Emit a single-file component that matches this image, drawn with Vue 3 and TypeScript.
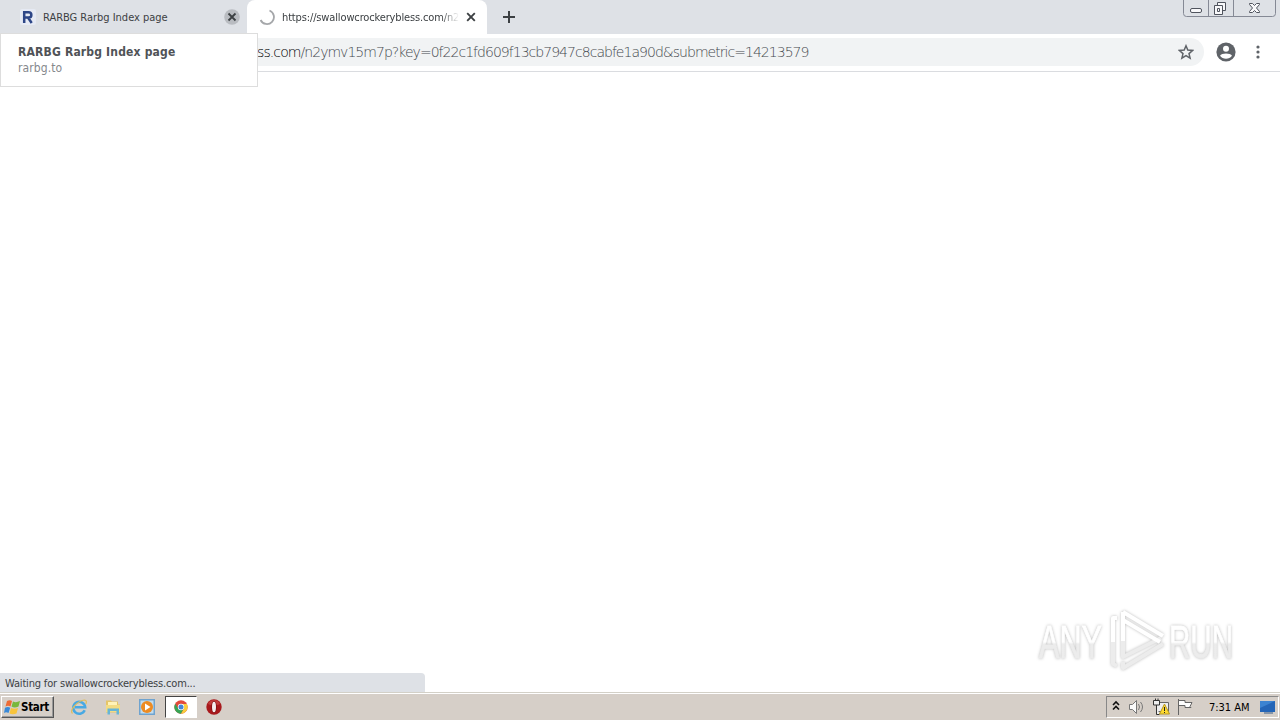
<script setup lang="ts">
const tabs = { first: 'RARBG Rarbg Index page', second: 'https://swallowcrockerybless.com/n2' }
</script>

<template>
  <div class="screen">
    <header class="strip">
      <div class="tab idle">
        <svg class="fav" width="16" height="16" viewBox="0 0 16 16"><rect width="16" height="16" rx="2" fill="#e6eaf4" /><path d="M4.200 14V3.300h4.300c3.800 0 3.800 5.200 0 5.200H4.200M8 8.500 11.700 14" fill="none" stroke="#2d4687" stroke-width="2.500" /></svg>
        <span class="title t1">{{ tabs.first }}</span>
        <svg class="close" width="16" height="16" viewBox="0 0 16 16"><circle cx="8" cy="8" r="7.800" fill="#b9bcc1" /><path d="m4.500 4.500 7 7m0-7-7 7" stroke="#3c4043" stroke-width="1.800" /></svg>
      </div>
      <div class="tab active">
        <svg class="fav" width="16" height="16" viewBox="0 0 16 16"><path d="M10.500 1.500A7 7 0 1 1 1.600 11" fill="none" stroke="#a5a7aa" stroke-width="1.800" /></svg>
        <span class="title t2">{{ tabs.second }}</span>
        <svg class="close" width="16" height="16" viewBox="0 0 16 16"><path d="m4.200 4.200 7.600 7.600m0-7.600-7.600 7.600" stroke="#3c4043" stroke-width="1.900" /></svg>
      </div>
      <svg class="plus" width="14" height="14" viewBox="0 0 14 14"><path d="M7 1v12M1 7h12" stroke="#3c4043" stroke-width="2" /></svg>
      <svg class="winbtns" width="96" height="18" viewBox="0 0 96 18" fill="none" stroke="#858995">
        <path d="M.5 0v13.500q0 3 3 3h86q3 0 3-3V0M25.500 0v16M50.500 0v16" />
        <g stroke="#50545e"><rect x="7.500" y="8.500" width="11" height="4" rx="1.500" fill="#f8f8fa" /><path d="M34.500 5.500v-3h8v8h-3M31.500 5.500h8v9h-8zM34.500 8.500h2v3h-2z" fill="#f8f8fa" /><path d="M66.500 3.500h3l2 2 2-2h3v1l-3 3.500 3 3.500v1h-3l-2-2-2 2h-3v-1l3-3.500-3-3.500z" fill="#f8f8fa" /></g>
      </svg>
    </header>

    <div class="toolbar">
      <div class="omnibox">
        <span class="url"><b>ss.com</b>/n2ymv15m7p?key=0f22c1fd609f13cb7947c8cabfe1a90d&amp;submetric=14213579</span>
        <svg class="star" width="16" height="16" viewBox="0 0 16 16"><path d="m8 1.800 1.800 4.300 4.700.4L11 9.600l1.100 4.600L8 11.700l-4.100 2.500L5 9.600 1.500 6.500l4.700-.4z" fill="none" stroke="#5f6368" stroke-width="1.500" /></svg>
      </div>
      <svg class="person" width="20" height="20" viewBox="0 0 20 20"><circle cx="10" cy="10" r="9.600" fill="#5f6368" /><circle cx="10" cy="6.700" r="3" fill="#fff" /><path d="M4 13.800c1.500-3 10.500-3 12 0-2.600 4-9.400 4-12 0z" fill="#fff" /></svg>
      <svg class="dots" width="4" height="16" viewBox="0 0 4 16" fill="#5f6368"><circle cx="2" cy="3" r="1.600" /><circle cx="2" cy="8" r="1.600" /><circle cx="2" cy="13" r="1.600" /></svg>
    </div>

    <main class="page">
      <div class="status"><span>Waiting for swallowcrockerybless.com...</span></div>
      <svg class="mark" width="215" height="80" viewBox="0 0 215 80">
        <defs><linearGradient id="fade" x1="0" y1="0" x2="0" y2="1"><stop offset=".5" stop-color="#fff" /><stop offset=".54" stop-color="#ececec" /></linearGradient></defs>
        <g class="word" fill="url(#fade)" stroke="url(#fade)" stroke-width=".8"><text x="9" y="58" textLength="63" lengthAdjust="spacingAndGlyphs">ANY</text><text x="139" y="58" textLength="64" lengthAdjust="spacingAndGlyphs">RUN</text></g>
        <g class="play" fill="none" stroke-linejoin="round"><path d="M83 41v23l4 2M93 40v17l38-19M93 62v6l40-24" stroke="#ececec" stroke-width="4" /><path d="M87 18h-4v24M93 12v29M93 12l40 24M93 20l37 22" stroke="#fff" stroke-width="4" /></g>
      </svg>
    </main>

    <footer class="taskbar">
      <div class="start">
        <svg width="17" height="16" viewBox="0 0 17 16"><path d="M3 2q3-1.500 5 0L6.500 7.500Q4 6 1.500 7.500z" fill="#ed6b35" /><path d="M9 2.500q3 1.500 7-.5l-1.500 5.500q-4 1.800-7 0z" fill="#79b83c" /><path d="M1 8.700q3-1.500 5.200 0L4.500 14Q2 12.500 0 14z" fill="#3889d8" /><path d="M7 9q3.500 1.500 7 0l-1.500 5.500q-4 1.500-7 0z" fill="#f8c43b" /></svg>
        <span>Start</span>
      </div>
      <svg class="app ie" width="18" height="18" viewBox="0 0 18 18" fill="none"><path d="M14.700 12.300A6 6 0 1 1 15.200 9.200H5" stroke="#48a9e3" stroke-width="2.500" /><path d="M2.500 15.500C-1 12 8 2.500 14.500 2c2 0 2.300 2 1.300 4" stroke="#dfbd5c" stroke-width="1.200" /></svg>
      <svg class="app folder" width="18" height="18" viewBox="0 0 18 18"><path d="M2 2.500h5l1 1h6v3h2v8H2z" fill="#e5c568" /><path d="M4 4h9v5H4z" fill="#fff3b8" /><path d="M2 7h14v7H2z" fill="#f3dc83" /><path d="M3.500 16.500v-6h11.500v6h-2.500v-3.500H6v3.500z" fill="#67b5d6" /></svg>
      <svg class="app media" width="18" height="18" viewBox="0 0 18 18"><path d="M1 1h16v16H1z" fill="#6fa3cf" /><path d="M2.500 2.500h13v13h-13z" fill="#c3dced" /><circle cx="9" cy="9" r="6" fill="#ed8b22" /><path d="m7 5.500 5.500 3.500L7 12.500z" fill="#fff" /></svg>
      <div class="pressed">
        <svg width="14" height="14" viewBox="0 0 14 14"><circle cx="7" cy="7" r="6.700" fill="#e24a3b" /><path d="M1.200 3.700A6.700 6.700 0 0 0 7 13.700L9.800 8.600 4.200 8.600z" fill="#35a555" /><path d="M7 13.700a6.700 6.700 0 0 0 5.900-9.700H7l3 4.500z" fill="#f8ce3c" /><circle cx="7" cy="7" r="3.200" fill="#fff" /><circle cx="7" cy="7" r="2.500" fill="#4285d8" /></svg>
      </div>
      <svg class="app opera" width="16" height="16" viewBox="0 0 16 16"><circle cx="8" cy="8" r="7.700" fill="#a8191c" /><path d="M2 5a6.500 6.500 0 0 1 12 0q-6 3-12 0" fill="#c23c3b" /><ellipse cx="8" cy="8" rx="2.800" ry="6" fill="#7c1012" /><ellipse cx="8" cy="8" rx="2" ry="5.300" fill="#f5eeee" /></svg>
      <div class="tray">
        <svg class="trayicons" width="90" height="20" viewBox="0 0 90 20" fill="none">
          <path d="m6 8 3-3 3 3m-6 4.500 3-3 3 3" stroke="#111" stroke-width="1.600" />
          <path d="M22.500 7.500h3l4-4v13l-4-4h-3z" fill="#fafafa" stroke="#777" /><path d="M31.500 7q2 3 0 6m2-8q4 5 0 10" stroke="#777" />
          <path d="M49.500 5.500h12v9h-12z" fill="#eee" stroke="#666" /><path d="M46.500 3.500h6v4.500h-6zM49.500 8v9.500h3M48.500 1.500v2m2.500-2v2" fill="#eee" stroke="#333" /><path d="m57.500 7 5 10h-10z" fill="#ffdb31" stroke="#b69622" /><path d="M57.500 10v4m0 1v1" stroke="#222" />
          <path d="M71.500 2v16M72 3.500h6v2h7l-2 4 1 1h-6v-2h-6" fill="#fff" stroke="#666" />
        </svg>
        <span class="clock">7:31 AM</span>
        <svg class="desktop" width="17" height="16" viewBox="0 0 17 16"><path d="M1 2h15v11H1z" fill="#2465b7" /><path d="M1 2h15L1 9z" fill="#3c83d1" /><path d="M5 14h9" stroke="#8695a8" stroke-width="2" /></svg>
      </div>
    </footer>

    <aside class="hovercard"><strong>RARBG Rarbg Index page</strong><span>rarbg.to</span></aside>
  </div>
</template>

<style>
body { overflow: hidden; background: #fff; }
</style>
<style scoped>
* { box-sizing: border-box; }
svg { display: block; flex: none; }
.screen { position: relative; width: 1280px; height: 720px; display: flex; flex-direction: column; overflow: hidden; font-family: "DejaVu Sans Condensed", "DejaVu Sans", sans-serif; font-stretch: condensed; }
.strip { height: 34px; display: flex; background: #dee1e6; }
.tab { height: 34px; display: flex; align-items: center; }
.idle { width: 247px; padding-left: 20px; }
.active { width: 240px; padding-left: 12px; background: #fff; border-radius: 8px 8px 0 0; }
.title { font-size: 11px; white-space: nowrap; color: #3c4043; line-height: 16px; padding-top: 1px; }
.t1 { width: 174px; margin: 0 7px; letter-spacing: -.02px; }
.t2 { width: 177px; margin: 0 4px 0 7px; letter-spacing: -.14px; mask-image: linear-gradient(90deg, #000 90%, transparent); }
.plus { margin: 10px 0 0 15px; }
.winbtns { margin-left: auto; margin-right: 1px; }
.toolbar { height: 38px; display: flex; align-items: center; border-bottom: 1px solid #dadce0; padding-bottom: 1px; }
.omnibox { width: 1204px; height: 28px; display: flex; align-items: center; padding-left: 257px; background: #f1f3f4; border-radius: 0 14px 14px 0; }
.url { font-family: "DejaVu Sans", sans-serif; font-stretch: normal; font-weight: 200; font-size: 14px; color: #44484d; white-space: nowrap; letter-spacing: -.97px; }
.url b { font-weight: 200; color: #000; letter-spacing: -.9px; }
.star { margin-left: auto; margin-right: 10px; }
.person { margin-left: 12px; }
.dots { margin-left: 20px; }
.page { height: 621px; display: flex; align-items: flex-end; justify-content: space-between; }
.status { width: 425px; height: 20px; padding: 3px 5px 1px; background: #dee1e6; border-radius: 0 4px 0 0; font-size: 11px; line-height: 16px; color: #3c4043; letter-spacing: -.17px; }
.mark { margin-right: 35px; margin-bottom: 13px; }
.word { font: 46px "Liberation Sans", sans-serif; filter: drop-shadow(0 0 1.500px #bbb); }
.play { filter: drop-shadow(0 0 1.500px #bbb); }
.taskbar { height: 27px; display: flex; align-items: center; border-top: 1px solid #fff; background: #d6cfc8; box-shadow: 0 -1px #d3d0c7; }
.start { margin-left: 1px; width: 53px; height: 22px; display: flex; align-items: center; padding-left: 2px; border: 1px solid; border-color: #fff #555 #555 #fff; box-shadow: inset -1px -1px #999; font-size: 11.500px; font-weight: bold; letter-spacing: -.3px; }
.app { flex: none; }
.ie { margin-left: 16px; }
.folder { margin-left: 16px; }
.media { margin-left: 16px; }
.pressed { width: 32px; height: 22px; margin-left: 9px; background: #fff; border: 1px solid; border-color: #444 #fff #fff #444; display: flex; justify-content: center; align-items: center; }
.opera { margin-left: 9px; }
.tray { margin-left: auto; margin-right: 1px; width: 173px; height: 22px; border: 1px solid; border-color: #888 #fff #fff #888; display: flex; align-items: center; }
.clock { margin-left: 12px; width: 41px; font-size: 11px; white-space: nowrap; letter-spacing: -.02px; }
.desktop { margin-left: 9px; }
.hovercard { position: absolute; top: 33px; left: 0; width: 258px; height: 54px; padding: 10px 17px 8px; background: #fff; border: 1px solid #ddd; display: flex; flex-direction: column; line-height: 16px; white-space: nowrap; color: #505357; }
.hovercard strong { font-size: 12px; letter-spacing: .18px; }
.hovercard span { font-size: 12px; color: #85888c; letter-spacing: .1px; }
</style>
